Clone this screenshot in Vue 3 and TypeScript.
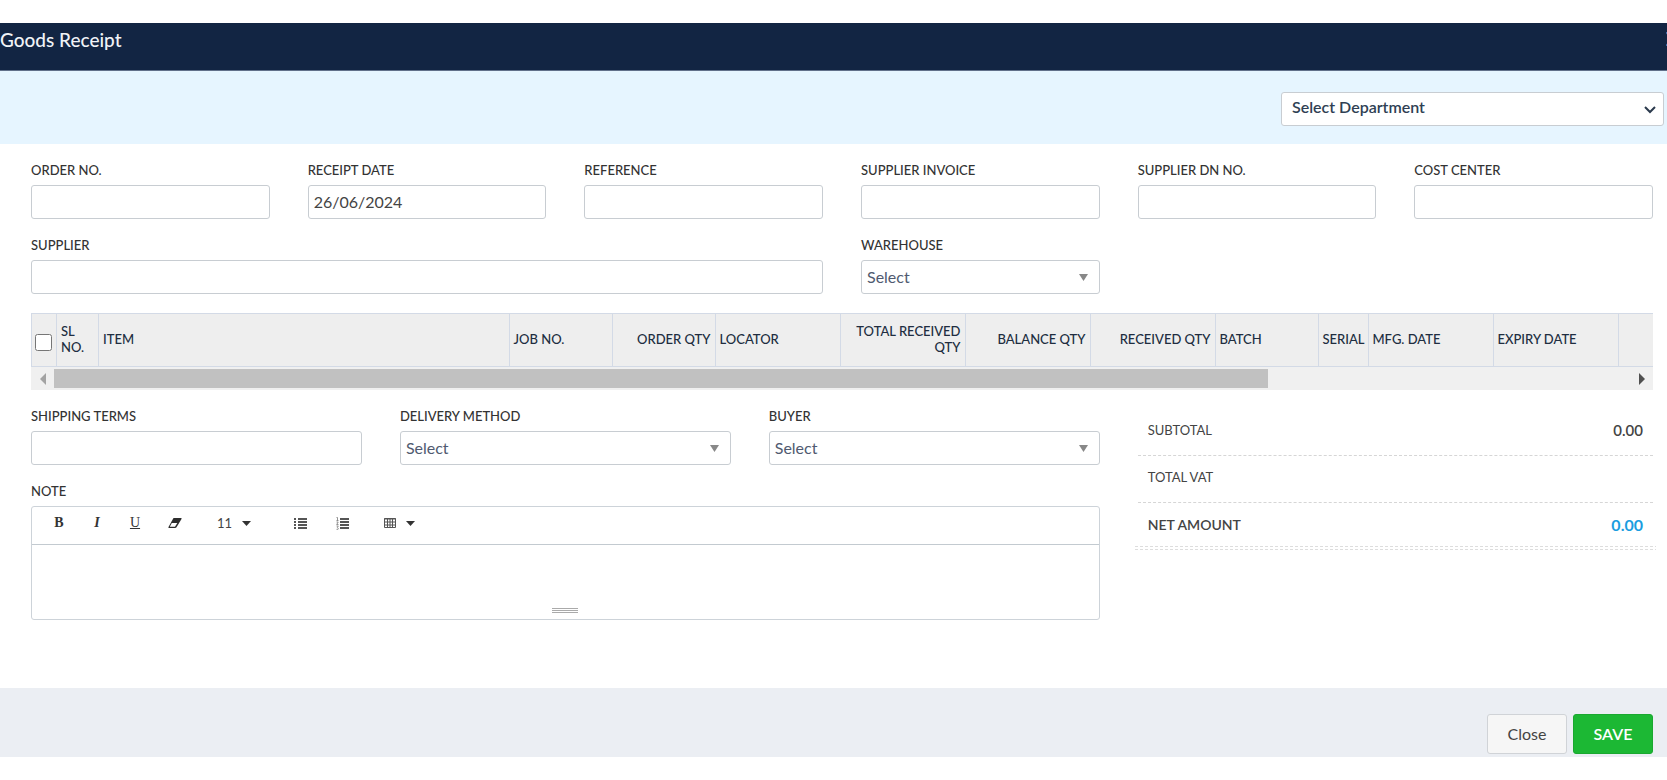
<script setup lang="ts">
import { ref } from 'vue'

interface Field {
  id: string
  label: string
  value: string
}

interface Column {
  label: string
  kind: string
  right?: boolean
}

const headerFields = ref<Field[]>([
  { id: 'order-no', label: 'ORDER NO.', value: '' },
  { id: 'receipt-date', label: 'RECEIPT DATE', value: '26/06/2024' },
  { id: 'reference', label: 'REFERENCE', value: '' },
  { id: 'supplier-invoice', label: 'SUPPLIER INVOICE', value: '' },
  { id: 'supplier-dn', label: 'SUPPLIER DN NO.', value: '' },
  { id: 'cost-center', label: 'COST CENTER', value: '' },
])

const columns: Column[] = [
  { label: 'SL NO.', kind: 'c-sl' },
  { label: 'ITEM', kind: 'c-item' },
  { label: 'JOB NO.', kind: 'c-mid' },
  { label: 'ORDER QTY', kind: 'c-mid', right: true },
  { label: 'LOCATOR', kind: 'c-wide' },
  { label: 'TOTAL RECEIVED QTY', kind: 'c-wide', right: true },
  { label: 'BALANCE QTY', kind: 'c-wide', right: true },
  { label: 'RECEIVED QTY', kind: 'c-wide', right: true },
  { label: 'BATCH', kind: 'c-mid' },
  { label: 'SERIAL', kind: 'c-serial' },
  { label: 'MFG. DATE', kind: 'c-wide' },
  { label: 'EXPIRY DATE', kind: 'c-wide' },
  { label: '', kind: 'c-end' },
]

const supplier = ref('')
const shipping = ref('')
const note = ref('')
const allRows = ref(false)
</script>

<template>
  <div class="dialog">
    <header class="title-bar">
      <h1>Goods Receipt</h1>
      <button class="dismiss" type="button" aria-label="Dismiss">
        <svg width="14" height="14" viewBox="0 0 14 14"><path d="M0 0L14 14M14 0L0 14" stroke="#3f6fb0" stroke-width="2" /></svg>
      </button>
    </header>

    <div class="department-bar">
      <div class="picker department">
        <select aria-label="Department">
          <option>Select Department</option>
        </select>
        <svg class="chevron" width="12" height="8" viewBox="0 0 12 8"><path d="M1 1L6 6L11 1" fill="none" stroke="#2b3a4d" stroke-width="2" /></svg>
      </div>
    </div>

    <form class="body" @submit.prevent>
      <div class="grid">
        <div v-for="f in headerFields" :key="f.id" class="field">
          <label :for="f.id">{{ f.label }}</label>
          <input :id="f.id" v-model="f.value" type="text" />
        </div>
        <div class="field span3">
          <label for="supplier">SUPPLIER</label>
          <input id="supplier" v-model="supplier" type="text" />
        </div>
        <div class="field">
          <label for="warehouse">WAREHOUSE</label>
          <div class="picker">
            <select id="warehouse"><option>Select</option></select>
            <svg class="arrow" width="9" height="7" viewBox="0 0 9 7"><path d="M0 0H9L4.500 7Z" fill="#888" /></svg>
          </div>
        </div>
      </div>

      <div class="items">
        <table>
          <thead>
            <tr>
              <th class="c-check"><input v-model="allRows" type="checkbox" aria-label="All rows" /></th>
              <th v-for="(c, i) in columns" :key="i" :class="[c.kind, { right: c.right }]">{{ c.label }}</th>
            </tr>
          </thead>
        </table>
        <div class="scrollbar">
          <button type="button" aria-label="Scroll left">
            <svg width="6" height="12" viewBox="0 0 6 12"><path d="M6 0V12L0 6Z" fill="#a3a3a3" /></svg>
          </button>
          <div class="track"><div class="thumb"></div></div>
          <button type="button" aria-label="Scroll right">
            <svg width="6" height="12" viewBox="0 0 6 12"><path d="M0 0V12L6 6Z" fill="#505050" /></svg>
          </button>
        </div>
      </div>

      <div class="grid lower">
        <div class="terms">
          <div class="field">
            <label for="shipping">SHIPPING TERMS</label>
            <input id="shipping" v-model="shipping" type="text" />
          </div>
          <div class="field">
            <label for="delivery">DELIVERY METHOD</label>
            <div class="picker">
              <select id="delivery"><option>Select</option></select>
              <svg class="arrow" width="9" height="7" viewBox="0 0 9 7"><path d="M0 0H9L4.500 7Z" fill="#888" /></svg>
            </div>
          </div>
          <div class="field">
            <label for="buyer">BUYER</label>
            <div class="picker">
              <select id="buyer"><option>Select</option></select>
              <svg class="arrow" width="9" height="7" viewBox="0 0 9 7"><path d="M0 0H9L4.500 7Z" fill="#888" /></svg>
            </div>
          </div>
          <div class="field whole">
            <label for="note">NOTE</label>
            <div class="editor">
              <div class="toolbar">
                <button type="button" class="letter"><b>B</b></button>
                <button type="button" class="letter"><b><i>I</i></b></button>
                <button type="button" class="letter under">U</button>
                <button type="button" class="erase" aria-label="Clear formatting">
                  <svg width="14" height="10" viewBox="0 0 14 10">
                    <path d="M5.500 0H13Q14 0 13.500 1L8.500 9.200Q8 10 7 10H1Q0 10 .5 9Z" fill="#2d2d2d" />
                    <path d="M3.800 5H9.300L7 8.800H1.800Z" fill="#fff" />
                  </svg>
                </button>
                <button type="button" class="size">
                  <span>11</span>
                  <svg width="9" height="5" viewBox="0 0 9 5"><path d="M0 0H9L4.500 5Z" fill="#333" /></svg>
                </button>
                <button type="button" class="bullets" aria-label="Bulleted list">
                  <svg width="13" height="11" viewBox="0 0 13 11"><path d="M0 0h2v2H0zM0 3h2v2H0zM0 6h2v2H0zM0 9h2v2H0zM4 0h9v2H4zM4 3h9v2H4zM4 6h9v2H4zM4 9h9v2H4z" fill="#555" /></svg>
                </button>
                <button type="button" class="numbers" aria-label="Numbered list">
                  <svg width="13" height="13" viewBox="0 0 13 13"><path d="M4 1h9v2H4zM4 4h9v2H4zM4 7h9v2H4zM4 10h9v2H4z" fill="#555" /><path d="M.5 .5H1.500V3.500M.5 3.500H2.500M.5 5H2.200L.7 7.500H2.500M.5 9H2.300L1.300 10.500Q2.500 10.800 2.200 12T.5 12.300" fill="none" stroke="#777" stroke-width=".8" /></svg>
                </button>
                <button type="button" class="tables" aria-label="Insert table">
                  <svg width="12" height="10" viewBox="0 0 12 10"><path d="M.5 .5H11.500V9.500H.5ZM0 1H12M3.500 0V10M6 0V10M8.500 0V10M0 4H12M0 7H12" fill="none" stroke="#555" /></svg>
                  <svg width="9" height="5" viewBox="0 0 9 5"><path d="M0 0H9L4.500 5Z" fill="#333" /></svg>
                </button>
              </div>
              <textarea id="note" v-model="note"></textarea>
              <div class="grip"></div>
            </div>
          </div>
        </div>

        <dl class="totals">
          <div><dt>SUBTOTAL</dt><dd>0.00</dd></div>
          <div><dt>TOTAL VAT</dt><dd></dd></div>
          <div class="net"><dt>NET AMOUNT</dt><dd>0.00</dd></div>
        </dl>
      </div>
    </form>

    <footer>
      <button class="close" type="button">Close</button>
      <button class="save" type="button">SAVE</button>
    </footer>
  </div>
</template>

<style>
body {
  background: #fff;
}
</style>

<style scoped>
.dialog,
.dialog * {
  box-sizing: border-box;
}

.dialog {
  padding-top: 23px;
  font-family: Lato, "Liberation Sans", sans-serif;
  font-size: 16px;
  color: #444;
}

input,
select,
button,
textarea {
  font: inherit;
  color: inherit;
  margin: 0;
}

.title-bar {
  height: 48px;
  display: flex;
  justify-content: space-between;
  align-items: flex-start;
  overflow: hidden;
  background: #122543;
  border-bottom: 1px solid #61708a;
}

h1 {
  margin: 0;
  padding-top: 5px;
  font-size: 19px;
  line-height: 24px;
  font-weight: 500;
  color: #f0f3f7;
}

.dismiss {
  margin: 9px -13px 0 0;
  padding: 0;
  border: 0;
  background: none;
  line-height: 0;
}

.department-bar {
  display: flex;
  justify-content: flex-end;
  height: 73px;
  padding: 21px 3px 0;
  background: #e6f5ff;
}

.department {
  width: 383px;
}

.department select {
  padding: 0 10px 5px;
  font-weight: 600;
  color: #2f3f54;
}

.picker {
  position: relative;
}

.picker svg {
  position: absolute;
  top: 14px;
  right: 12px;
  pointer-events: none;
}

.picker .chevron {
  right: 8px;
}

.body {
  padding: 17px 14px 68px 31px;
}

.grid {
  display: grid;
  grid-template-columns: repeat(6, minmax(0, 1fr));
  gap: 17px 38px;
}

.span3 {
  grid-column: span 3;
}

.field label {
  display: block;
  margin-bottom: 6px;
  font-size: 13px;
  line-height: 18px;
  font-weight: 500;
  color: #333;
}

.field > input,
select {
  display: block;
  width: 100%;
  height: 34px;
  padding: 0 5px 2px;
  border: 1px solid #c8cdd2;
  border-radius: 3px;
  background: #fff;
  appearance: none;
}

.field select {
  color: #505a70;
}

.items {
  margin: 19px 0 17px;
  overflow: hidden;
}

table {
  width: 100%;
  table-layout: fixed;
  border-collapse: collapse;
  background: #eee;
}

th {
  height: 53px;
  padding: 0 4px 2px;
  border: 1px solid #d3dae6;
  font-size: 13px;
  line-height: 16px;
  font-weight: 500;
  text-align: left;
  color: #202d40;
}

th:last-child {
  border-right: 0;
}

.right {
  text-align: right;
}

.c-check { width: 25px; padding: 4px 3px 0; }
.c-check input { display: block; width: 17px; height: 17px; }
.c-sl { width: 42px; }
.c-mid { width: 103px; }
.c-wide { width: 125px; }
.c-serial { width: 50px; }
.c-end { width: 35px; }

.scrollbar {
  display: flex;
  height: 23px;
  background: #f0f0f0;
}

.scrollbar button {
  display: flex;
  align-items: center;
  justify-content: center;
  width: 23px;
  padding: 0;
  border: 0;
  background: none;
}

.track {
  flex: 1;
  padding: 2px 0;
}

.thumb {
  width: 77%;
  height: 19px;
  background: #c1c1c1;
}

.terms {
  grid-column: span 4;
  display: grid;
  grid-template-columns: repeat(3, minmax(0, 1fr));
  gap: 17px 38px;
}

.whole {
  grid-column: 1 / -1;
}

.editor {
  border: 1px solid #cdd3d9;
  border-radius: 3px;
}

.toolbar {
  display: flex;
  align-items: center;
  height: 38px;
  padding: 0 8px 5px;
  border-bottom: 1px solid #c3cad0;
}

.toolbar button {
  display: flex;
  align-items: center;
  justify-content: center;
  gap: 10px;
  width: 38px;
  height: 30px;
  padding: 0;
  border: 0;
  background: none;
}

.toolbar .letter {
  font-family: "Liberation Serif", serif;
  font-size: 14px;
  color: #333;
}

.toolbar .under {
  text-decoration: underline;
}

.toolbar .erase { width: 42px; }
.toolbar .size { width: 60px; margin-left: 8px; font-size: 13px; }
.toolbar .bullets { margin-left: 17px; }
.toolbar .numbers { margin-left: 4px; }
.toolbar .tables { margin-left: 8px; width: 60px; }

textarea {
  display: block;
  width: 100%;
  height: 63px;
  padding: 8px;
  border: 0;
  resize: none;
  background: none;
}

.grip {
  width: 26px;
  height: 5px;
  margin: 0 auto 6px;
  border: solid #aaa;
  border-width: 1px 0;
  background: linear-gradient(#fff 1px, #aaa 1px, #aaa 2px, #fff 2px);
}

.totals {
  grid-column: span 2;
  margin: 2px 0 0;
}

.totals div {
  display: flex;
  justify-content: space-between;
  align-items: center;
  height: 47px;
  padding: 0 10px 4px;
  border-bottom: 1px dashed #d6d6d6;
  font-size: 13px;
}

.totals dd {
  margin: 0;
  font-size: 15px;
  font-weight: 600;
}

.totals .net {
  margin: 0 -3px;
  padding: 0 13px 4px;
  border: 0;
  font-size: 14px;
  font-weight: 600;
  background:
    repeating-linear-gradient(90deg, #ddd 0 3px, transparent 3px 5px) bottom 3px left / 100% 1px no-repeat,
    repeating-linear-gradient(90deg, #ddd 0 3px, transparent 3px 5px) bottom left / 100% 1px no-repeat;
}

.totals .net dd {
  font-size: 16px;
  font-weight: 700;
  color: #1a9de0;
}

footer {
  display: flex;
  justify-content: flex-end;
  gap: 6px;
  padding: 26px 14px 3px;
  background: #ebeef3;
}

footer button {
  width: 80px;
  height: 40px;
  padding: 0 0 2px;
  border: 1px solid #d0d3d7;
  border-radius: 3px;
  background: #f6f6f6;
}

footer .save {
  border-color: #1aa830;
  background: #1cb834;
  font-weight: 600;
  color: #fff;
}
</style>
